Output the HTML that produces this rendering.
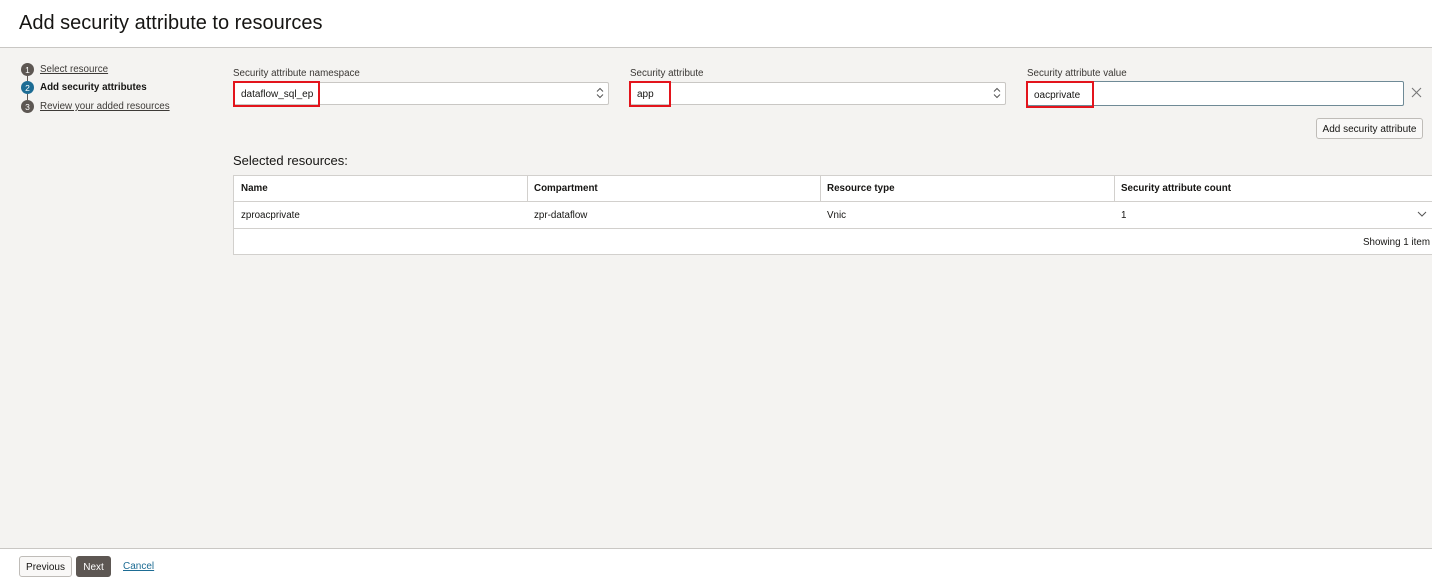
<!DOCTYPE html>
<html><head><style>
*{box-sizing:border-box;margin:0;padding:0}
body{width:1432px;height:585px;overflow:hidden;background:#f4f3f1;font-family:"Liberation Sans",sans-serif;color:#161513;position:relative;font-size:11px}
.abs{position:absolute}
.hdr{left:0;top:0;width:1432px;height:48px;background:#fff;border-bottom:1px solid #c9c7c4}
.hdr h1{position:absolute;left:19px;top:12px;font-size:20px;font-weight:normal}
.step{left:21px;font-size:9.8px;display:flex;align-items:center}
.step .c{width:13px;height:13px;border-radius:50%;background:#5d5753;color:#fff;font-size:8.5px;display:flex;align-items:center;justify-content:center;margin-right:6px}
.step a{color:#3d3a37;text-decoration:underline}
.lbl{font-size:9.8px;color:#3a3734}
.inp{height:23px;background:#fff;border:1px solid #c9c7c4;border-radius:2px}
.red{border:2px solid #e3141c;font-size:10px;padding:6px 0 0 6px}
.btn{border:1px solid #bfbcb8;border-radius:3px;background:#f9f8f7;font-size:10px;display:flex;align-items:center;justify-content:center}
.tbl{left:233px;top:175px;width:1200px;background:#fff;border:1px solid #d2d0cd}
.cell{position:absolute;font-size:9.8px}
</style></head><body>
<div class="abs hdr"><h1>Add security attribute to resources</h1></div>

<div class="abs step" style="top:63px"><span class="c">1</span><a>Select resource</a></div>
<div class="abs" style="left:27px;top:76px;width:1px;height:5px;background:#5d5753"></div>
<div class="abs step" style="top:81px"><span class="c" style="background:#1d6c94">2</span><b>Add security attributes</b></div>
<div class="abs" style="left:27px;top:94px;width:1px;height:6px;background:#5d5753"></div>
<div class="abs step" style="top:100px"><span class="c">3</span><a>Review your added resources</a></div>

<div class="abs lbl" style="left:233px;top:68px">Security attribute namespace</div>
<div class="abs inp" style="left:233px;top:82px;width:376px"></div>
<div class="abs red" style="left:233px;top:81px;width:87px;height:26px">dataflow_sql_ep</div>
<svg class="abs" style="left:596px;top:87px" width="8" height="12" viewBox="0 0 8 12"><path d="M1 4.5L4 1.5L7 4.5M1 7.5L4 10.5L7 7.5" fill="none" stroke="#555" stroke-width="1"/></svg>

<div class="abs lbl" style="left:630px;top:68px">Security attribute</div>
<div class="abs inp" style="left:630px;top:82px;width:376px"></div>
<div class="abs red" style="left:629px;top:81px;width:42px;height:26px">app</div>
<svg class="abs" style="left:993px;top:87px" width="8" height="12" viewBox="0 0 8 12"><path d="M1 4.5L4 1.5L7 4.5M1 7.5L4 10.5L7 7.5" fill="none" stroke="#555" stroke-width="1"/></svg>

<div class="abs lbl" style="left:1027px;top:68px">Security attribute value</div>
<div class="abs inp" style="left:1027px;top:81px;width:377px;height:25px;border-color:#6f8a96"></div>
<div class="abs red" style="left:1026px;top:81px;width:68px;height:27px;padding-top:7px">oacprivate</div>
<svg class="abs" style="left:1411px;top:87px" width="11" height="11" viewBox="0 0 11 11"><path d="M1 1L10 10M10 1L1 10" stroke="#777" stroke-width="1.1"/></svg>

<div class="abs btn" style="left:1316px;top:118px;width:107px;height:21px;padding-top:1px">Add security attribute</div>

<div class="abs" style="left:233px;top:153px;font-size:13px">Selected resources:</div>

<div class="abs tbl" style="height:80px">
<div class="abs" style="left:0;top:25px;width:1200px;border-top:1px solid #d2d0cd"></div>
<div class="abs" style="left:0;top:52px;width:1200px;border-top:1px solid #d2d0cd"></div>
<div class="abs" style="left:293px;top:0;height:25px;border-left:1px solid #d2d0cd"></div>
<div class="abs" style="left:586px;top:0;height:25px;border-left:1px solid #d2d0cd"></div>
<div class="abs" style="left:880px;top:0;height:25px;border-left:1px solid #d2d0cd"></div>
<b class="cell" style="left:7px;top:7px">Name</b>
<b class="cell" style="left:300px;top:7px">Compartment</b>
<b class="cell" style="left:593px;top:7px">Resource type</b>
<b class="cell" style="left:887px;top:7px">Security attribute count</b>
<span class="cell" style="left:7px;top:34px">zproacprivate</span>
<span class="cell" style="left:300px;top:34px">zpr-dataflow</span>
<span class="cell" style="left:593px;top:34px">Vnic</span>
<span class="cell" style="left:887px;top:34px">1</span>
<svg class="abs" style="left:1183px;top:35px" width="10" height="6" viewBox="0 0 10 6"><path d="M1 1L5 5L9 1" fill="none" stroke="#555" stroke-width="1"/></svg>
<span class="cell" style="left:1129px;top:61px">Showing 1 item</span>
</div>

<div class="abs" style="left:0;top:548px;width:1432px;height:37px;background:#fff;border-top:1px solid #c9c7c4"></div>
<div class="abs btn" style="left:19px;top:556px;width:53px;height:21px;padding-top:1px">Previous</div>
<div class="abs btn" style="left:76px;top:556px;width:35px;height:21px;padding-top:1px;background:#5d5753;color:#fff;border-color:#5d5753">Next</div>
<a class="abs" style="left:123px;top:561px;font-size:10px;color:#1d6c94;text-decoration:underline">Cancel</a>
</body></html>
